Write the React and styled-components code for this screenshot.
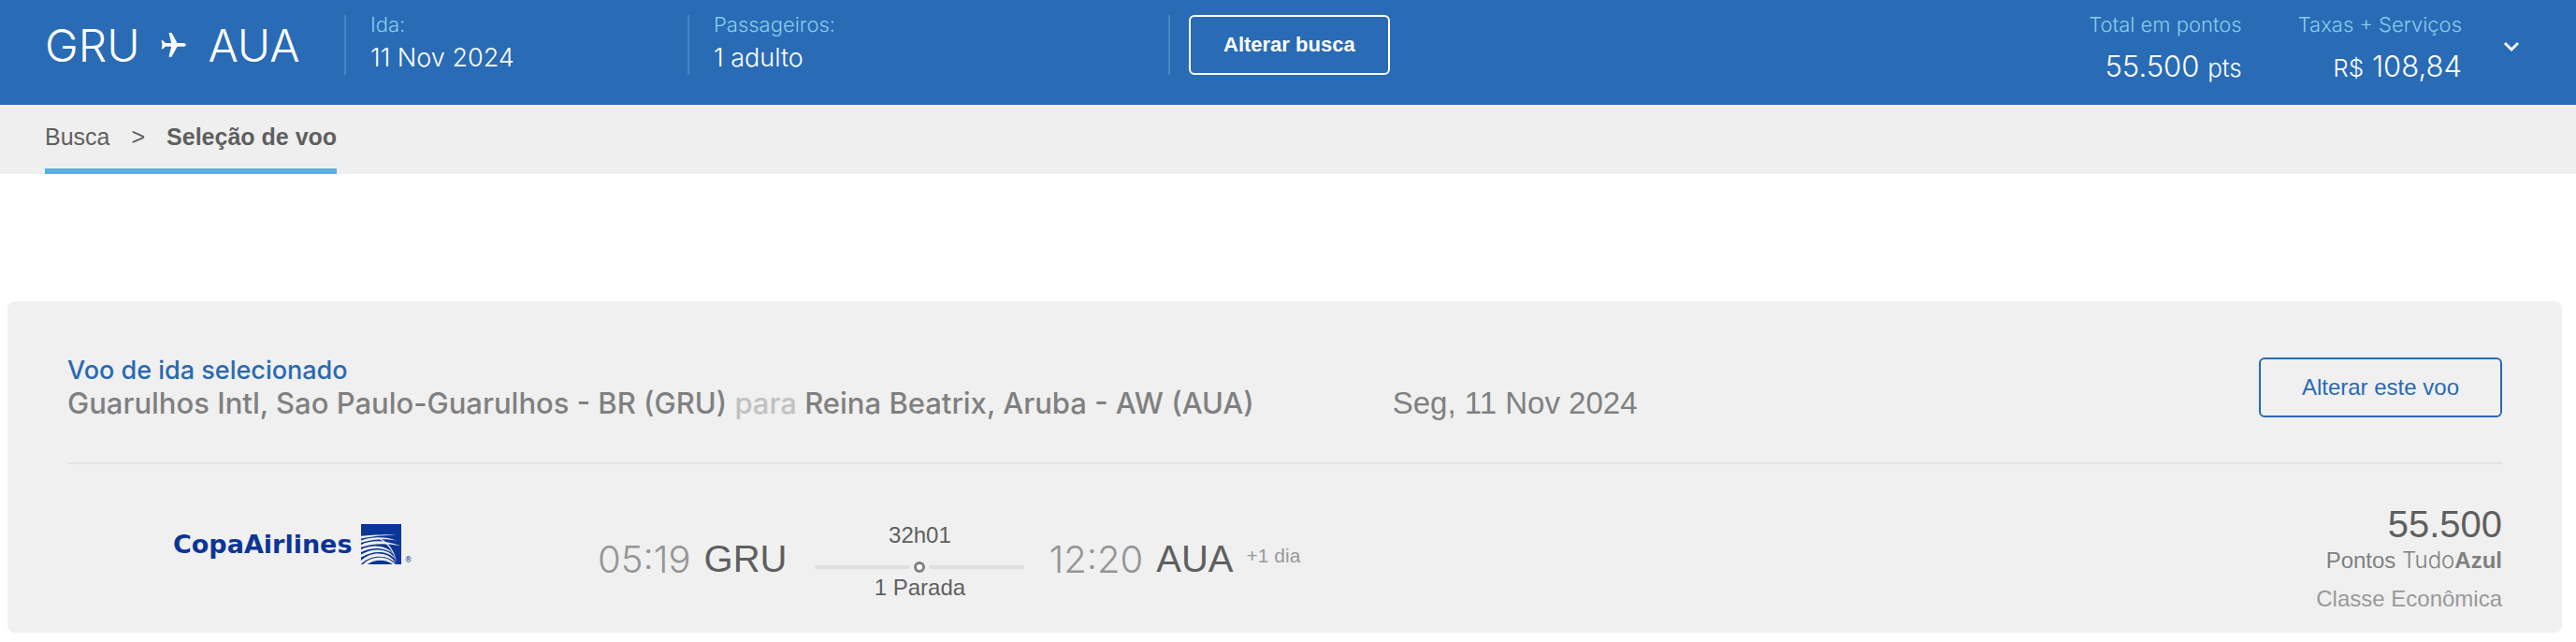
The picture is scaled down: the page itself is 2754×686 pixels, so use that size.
import React from "react";
import styled, { createGlobalStyle } from "styled-components";

// Inter carries the light and medium weights, Liberation Sans the regular and bold ones
const thin = 'Inter, "Liberation Sans", sans-serif';

const GlobalStyle = createGlobalStyle`
  * {
    box-sizing: border-box;
  }
  body {
    margin: 0;
    background: #fff;
    font-family: "Liberation Sans", Arial, sans-serif;
    color: #5f5f5f;
  }
  p, h1, h2 {
    margin: 0;
    font-weight: inherit;
  }
`;

const Header = styled.header`
  display: flex;
  align-items: flex-start;
  min-height: 112px;
  padding: 16px 60px 12px 48px;
  background: #296bb5;
  color: #fff;
  font-family: ${thin};
  font-weight: 300;
`;
const Route = styled.h1`
  display: flex;
  align-items: center;
  gap: 23px;
  flex: 0 0 320px;
  height: 64px;
  font-size: 48px;
`;
const Field = styled.div`
  flex: 0 1 ${({ $width }) => $width}px;
  height: 64px;
  padding-left: 26px;
  border-left: 2px solid #4587c4;
  white-space: nowrap;
`;
const Label = styled.p`
  font-size: 22px;
  line-height: 20px;
  color: #8accea;
`;
const Value = styled.p`
  margin-top: 6px;
  font-size: 27px;
  line-height: 40px;
`;
const ButtonSlot = styled.div`
  padding-left: 20px;
  border-left: 2px solid #4587c4;
`;
const Button = styled.button`
  height: 64px;
  padding: 0 ${({ $pad }) => $pad}px;
  border: 2px solid currentColor;
  border-radius: 6px;
  background: transparent;
  color: #2a69b2;
  font-family: "Liberation Sans", Arial, sans-serif;
  font-size: 24px;
  white-space: nowrap;
  cursor: pointer;
`;
const SearchButton = styled(Button)`
  color: #fff;
  font-size: 22px;
  font-weight: 700;
`;
const Totals = styled.div`
  display: flex;
  gap: 60px;
  margin-left: auto;
  text-align: right;
  white-space: nowrap;
`;
const Total = styled.p`
  margin-top: 14px;
  font-size: 31px;
  line-height: 42px;

  small {
    font-size: 26px;
  }
`;
const Toggle = styled.button`
  display: flex;
  align-items: center;
  justify-content: center;
  height: 68px;
  margin-left: 44px;
  padding: 0;
  border: 0;
  background: none;
  color: inherit;
  cursor: pointer;
`;

const Crumbs = styled.nav`
  display: flex;
  height: 74px;
  padding: 0 48px;
  background: #efefef;
`;
const Trail = styled.div`
  display: flex;
  align-items: center;
  gap: 23px;
  border-bottom: 6px solid #4db5e0;
  font-size: 25px;

  a {
    color: inherit;
    text-decoration: none;
  }
`;

const Card = styled.section`
  margin: 136px 15px 10px 8px;
  padding: 0 64px;
  border-radius: 8px;
  background: #f0f0f0;
`;
const CardTop = styled.div`
  display: flex;
  align-items: center;
  justify-content: space-between;
  padding: 57px 0 45px;
  border-bottom: 2px solid #e3e3e3;
`;
const CardTitle = styled.h2`
  font-family: ${thin};
  font-size: 27px;
  line-height: 34px;
  font-weight: 500;
  color: #2a69b2;
`;
const Itinerary = styled.div`
  display: flex;
  gap: 148px;
  font-size: 33px;
  line-height: 36px;
  color: #808080;
`;
const Airports = styled.p`
  font-family: ${thin};
  font-size: 31px;
  font-weight: 500;

  span {
    color: #c1c1c1;
  }
`;

const Flight = styled.div`
  display: flex;
  align-items: center;
  padding: 42px 0 19px;
`;
const Airline = styled.div`
  display: flex;
  align-items: center;
  flex: 0 0 567px;
  padding: 0 0 32px 113px;
  font-family: "DejaVu Sans", sans-serif;
  font-size: 27px;
  font-weight: 700;
  color: #0b3596;

  svg {
    margin: 0 4px 0 9px;
  }
  small {
    align-self: flex-end;
    font-size: 8px;
    font-weight: 400;
  }
`;
const Stop = styled.p`
  display: flex;
  align-items: center;
  gap: 14px;
  font-size: 40px;
  white-space: nowrap;
`;
const Time = styled.time`
  font-family: ${thin};
  font-weight: 300;
  color: #959595;
`;
const NextDay = styled.span`
  padding-bottom: 8px;
  font-size: 21px;
  color: #999;
`;
const Duration = styled.div`
  width: 224px;
  margin: 4px 26px 0 30px;
  font-size: 24px;
  line-height: 32px;
  text-align: center;
`;
const Track = styled.div`
  display: flex;
  align-items: center;
  gap: 4px;
  margin-top: 12px;

  &::before,
  &::after {
    content: "";
    flex: 1;
    height: 4px;
    border-radius: 2px;
    background: #dedede;
  }
`;
const Dot = styled.span`
  width: 12px;
  height: 12px;
  border: 3px solid #808080;
  border-radius: 50%;
  background: #fff;
`;
const Price = styled.div`
  margin-left: auto;
  text-align: right;
  white-space: nowrap;
  font-size: 24px;
  line-height: 34px;
  color: #808080;
`;
const Points = styled.p`
  font-size: 40px;
  line-height: 44px;
  color: #5f5f5f;
`;
const Light = styled.span`
  font-family: ${thin};
  font-weight: 300;
`;
const CabinClass = styled.p`
  margin-top: 7px;
  color: #999;
`;

const PlaneIcon = () => (
  <svg width="27" height="26" viewBox="0 0 80 78" fill="currentColor" aria-hidden="true">
    <path d="M80 38C80 42 76 44 70 44H52L34 77H25L33 44H14L6 52H1L4 38L1 25H6L14 33H33L25 0H34L52 33H70C76 33 80 35 80 38Z" />
  </svg>
);

const ChevronIcon = () => (
  <svg width="18" height="12" viewBox="0 0 18 12" fill="none" stroke="currentColor" strokeWidth="3" aria-hidden="true">
    <path d="M2 2L9 9L16 2" />
  </svg>
);

const CopaMark = () => (
  <svg width="43" height="43" viewBox="0 0 128 128" fill="#f0f0f0" aria-hidden="true">
    <path fill="#0b3596" d="M0 0H128V128H0Z" />
    <path d="M0 38C30 36 70 31 112 35C75 35 45 38 0 46Z" />
    <path d="M0 52C36 40 76 39 116 53C80 46 45 47 0 59Z" />
    <path d="M0 66C36 47 84 54 127 70C84 61 42 60 0 74Z" />
    <path d="M46 42C84 50 108 84 113 124C103 84 80 56 46 42Z" />
    <path d="M0 81C36 62 84 68 104 96C80 76 40 70 0 89Z" />
    <path d="M0 97C38 73 92 76 110 113C86 84 40 82 0 106Z" />
    <path d="M0 116C36 82 92 88 112 127C88 98 36 94 0 127Z" />
    <path d="M6 128C36 98 84 100 109 128H101C78 110 42 112 20 128Z" />
  </svg>
);

const App = () => {
  return (
    <>
      <GlobalStyle />
      <Header>
        <Route>
          <span>GRU</span>
          <PlaneIcon />
          <span>AUA</span>
        </Route>
        <Field $width={367}>
          <Label>Ida:</Label>
          <Value>11 Nov 2024</Value>
        </Field>
        <Field $width={514}>
          <Label>Passageiros:</Label>
          <Value>1 adulto</Value>
        </Field>
        <ButtonSlot>
          <SearchButton $pad={35}>Alterar busca</SearchButton>
        </ButtonSlot>
        <Totals>
          <div>
            <Label>Total em pontos</Label>
            <Total>
              55.500 <small>pts</small>
            </Total>
          </div>
          <div>
            <Label>Taxas + Serviços</Label>
            <Total>
              <small>R$</small> 108,84
            </Total>
          </div>
        </Totals>
        <Toggle aria-label="Detalhes">
          <ChevronIcon />
        </Toggle>
      </Header>

      <Crumbs>
        <Trail>
          <a href="#busca">Busca</a>
          <span>&gt;</span>
          <b>Seleção de voo</b>
        </Trail>
      </Crumbs>

      <Card>
        <CardTop>
          <div>
            <CardTitle>Voo de ida selecionado</CardTitle>
            <Itinerary>
              <Airports>
                Guarulhos Intl, Sao Paulo-Guarulhos - BR (GRU) <span>para</span> Reina Beatrix, Aruba - AW (AUA)
              </Airports>
              <p>Seg, 11 Nov 2024</p>
            </Itinerary>
          </div>
          <Button $pad={44}>Alterar este voo</Button>
        </CardTop>
        <Flight>
          <Airline>
            CopaAirlines
            <CopaMark />
            <small>®</small>
          </Airline>
          <Stop>
            <Time>05:19</Time>
            <span>GRU</span>
          </Stop>
          <Duration>
            <p>32h01</p>
            <Track>
              <Dot />
            </Track>
            <p>1 Parada</p>
          </Duration>
          <Stop>
            <Time>12:20</Time>
            <span>AUA</span>
            <NextDay>+1 dia</NextDay>
          </Stop>
          <Price>
            <Points>55.500</Points>
            <p>
              Pontos <Light>Tudo</Light>
              <b>Azul</b>
            </p>
            <CabinClass>Classe Econômica</CabinClass>
          </Price>
        </Flight>
      </Card>
    </>
  );
};

export default App;
